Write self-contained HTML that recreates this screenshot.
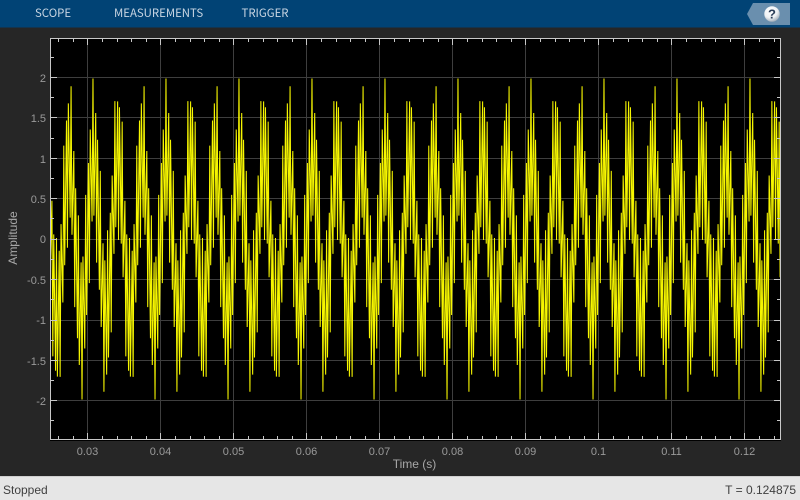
<!DOCTYPE html>
<html><head><meta charset="utf-8"><title>Scope</title>
<style>
html,body{margin:0;padding:0;width:800px;height:500px;overflow:hidden;background:#262626}
svg{display:block}
.t{font-family:"Noto Sans CJK JP","Liberation Sans",sans-serif;font-size:11.4px;fill:#c9d6e3}
.l{font-family:"Liberation Sans",sans-serif;font-size:11px;fill:#9a9a9a}
.a{font-family:"Liberation Sans",sans-serif;font-size:12px;fill:#a8a8a8}
.s{font-family:"Liberation Sans",sans-serif;font-size:12px;fill:#404040}
</style></head><body>
<svg width="800" height="500" viewBox="0 0 800 500" xmlns="http://www.w3.org/2000/svg">
<defs>
<radialGradient id="hb" cx="40%" cy="30%" r="75%"><stop offset="0" stop-color="#fff"/><stop offset=".6" stop-color="#eef1f4"/><stop offset="1" stop-color="#9aa6b2"/></radialGradient>
<clipPath id="c"><rect x="51" y="39" width="729" height="400"/></clipPath>
<polyline id="p" fill="none" stroke="#f6f600" stroke-width="1.05" vector-effect="non-scaling-stroke" stroke-linejoin="bevel" points="0,0 1,.9405 2,-.546 3,1.3565 4,.809 5,.2168 6,1.9877 7,.2898 8,.9511 9,1.5597 10,-.2929 11,1.2296 12,.309 13,-.6286 14,.8436 15,-1.0898 16,-.5878 17,-.0533 18,-1.891 19,-.2653 20,-1 21,-1.6795 22,.109 23,-1.4675 24,-.5878 25,.3244 26,-1.1564 27,.7856 28,.309 29,-.1846 30,1.7071 31,.1455 32,.9511 33,1.704 34,-.0123 35,1.631 36,.809 37,-.0577 38,1.454 39,-.4737 40,0 41,.4737 42,-1.454 43,.0577 44,-.809 45,-1.631 46,.0123 47,-1.704 48,-.9511 49,-.1455 50,-1.7071 51,.1846 52,-.309 53,-.7856 54,1.1564 55,-.3244 56,.5878 57,1.4675 58,-.109 59,1.6795 60,1 61,.2653 62,1.891 63,.0533 64,.5878 65,1.0898 66,-.8436 67,.6286 68,-.309 69,-1.2296 70,.2929 71,-1.5597 72,-.9511 73,-.2898 74,-1.9877 75,-.2168 76,-.809 77,-1.3565 78,.546 79,-.9405 80,0"/>
</defs>
<rect width="800" height="500" fill="#262626"/>
<rect width="800" height="27.5" fill="#014375"/>
<text class="t" x="35" y="17">SCOPE</text>
<text class="t" x="114" y="17">MEASUREMENTS</text>
<text class="t" x="241.500" y="17">TRIGGER</text>
<polygon points="747,14 753,3 790,3 790,25 753,25" fill="#6a8fae"/>
<circle cx="772" cy="14" r="7.700" fill="url(#hb)"/>
<text x="772" y="18.500" text-anchor="middle" font-family="Liberation Sans,sans-serif" font-weight="bold" font-size="13" fill="#2c3e58">?</text>

<rect x="50" y="38" width="731" height="403" fill="#000"/>
<g stroke="#3e3e3e" stroke-width="1" fill="none" shape-rendering="crispEdges">
<path d="M87.500 39V439M160.500 39V439M233.500 39V439M306.500 39V439M379.500 39V439M452.500 39V439M525.500 39V439M598.500 39V439M671.500 39V439M744.500 39V439"/>
<path d="M51 77.500H780M51 117.500H780M51 158.500H780M51 198.500H780M51 239.500H780M51 279.500H780M51 320.500H780M51 360.500H780M51 400.500H780"/>
</g>
<g clip-path="url(#c)">
<use href="#p" transform="translate(14.5,239) scale(.9125,-80.75)"/>
<use href="#p" transform="translate(87.5,239) scale(.9125,-80.75)"/>
<use href="#p" transform="translate(160.5,239) scale(.9125,-80.75)"/>
<use href="#p" transform="translate(233.5,239) scale(.9125,-80.75)"/>
<use href="#p" transform="translate(306.5,239) scale(.9125,-80.75)"/>
<use href="#p" transform="translate(379.5,239) scale(.9125,-80.75)"/>
<use href="#p" transform="translate(452.5,239) scale(.9125,-80.75)"/>
<use href="#p" transform="translate(525.5,239) scale(.9125,-80.75)"/>
<use href="#p" transform="translate(598.5,239) scale(.9125,-80.75)"/>
<use href="#p" transform="translate(671.5,239) scale(.9125,-80.75)"/>
<use href="#p" transform="translate(744.5,239) scale(.9125,-80.75)"/>
</g>
<g stroke="#c8c8c8" stroke-width="1" fill="none" shape-rendering="crispEdges">
<path d="M50.500 38.500H780.500V439.500H50.500Z"/>
<path d="M87.500 39v6M160.500 39v6M233.500 39v6M306.500 39v6M379.500 39v6M452.500 39v6M525.500 39v6M598.500 39v6M671.500 39v6M744.500 39v6"/>
<path d="M87.500 439v-6M160.500 439v-6M233.500 439v-6M306.500 439v-6M379.500 439v-6M452.500 439v-6M525.500 439v-6M598.500 439v-6M671.500 439v-6M744.500 439v-6"/>
<path d="M58.500 39v3M73.500 39v3M102.500 39v3M117.500 39v3M131.500 39v3M146.500 39v3M175.500 39v3M190.500 39v3M204.500 39v3M219.500 39v3M248.500 39v3M263.500 39v3M277.500 39v3M292.500 39v3M321.500 39v3M336.500 39v3M350.500 39v3M365.500 39v3M394.500 39v3M409.500 39v3M423.500 39v3M438.500 39v3M467.500 39v3M482.500 39v3M496.500 39v3M511.500 39v3M540.500 39v3M555.500 39v3M569.500 39v3M584.500 39v3M613.500 39v3M628.500 39v3M642.500 39v3M657.500 39v3M686.500 39v3M701.500 39v3M715.500 39v3M730.500 39v3M759.500 39v3M774.500 39v3"/>
<path d="M58.500 439v-3M73.500 439v-3M102.500 439v-3M117.500 439v-3M131.500 439v-3M146.500 439v-3M175.500 439v-3M190.500 439v-3M204.500 439v-3M219.500 439v-3M248.500 439v-3M263.500 439v-3M277.500 439v-3M292.500 439v-3M321.500 439v-3M336.500 439v-3M350.500 439v-3M365.500 439v-3M394.500 439v-3M409.500 439v-3M423.500 439v-3M438.500 439v-3M467.500 439v-3M482.500 439v-3M496.500 439v-3M511.500 439v-3M540.500 439v-3M555.500 439v-3M569.500 439v-3M584.500 439v-3M613.500 439v-3M628.500 439v-3M642.500 439v-3M657.500 439v-3M686.500 439v-3M701.500 439v-3M715.500 439v-3M730.500 439v-3M759.500 439v-3M774.500 439v-3"/>
<path d="M51 77.500h6M51 117.500h6M51 158.500h6M51 198.500h6M51 239.500h6M51 279.500h6M51 320.500h6M51 360.500h6M51 400.500h6"/>
<path d="M780 77.500h-6M780 117.500h-6M780 158.500h-6M780 198.500h-6M780 239.500h-6M780 279.500h-6M780 320.500h-6M780 360.500h-6M780 400.500h-6"/>
<path d="M51 57.500h3M51 97.500h3M51 138.500h3M51 178.500h3M51 218.500h3M51 259.500h3M51 299.500h3M51 340.500h3M51 380.500h3M51 420.500h3"/>
<path d="M780 57.500h-3M780 97.500h-3M780 138.500h-3M780 178.500h-3M780 218.500h-3M780 259.500h-3M780 299.500h-3M780 340.500h-3M780 380.500h-3M780 420.500h-3"/>
</g>
<g text-anchor="end">
<text class="l" x="46" y="82">2</text>
<text class="l" x="46" y="122">1.5</text>
<text class="l" x="46" y="163">1</text>
<text class="l" x="46" y="203">0.5</text>
<text class="l" x="46" y="243">0</text>
<text class="l" x="46" y="284">-0.5</text>
<text class="l" x="46" y="324">-1</text>
<text class="l" x="46" y="365">-1.5</text>
<text class="l" x="46" y="405">-2</text>
</g>
<g text-anchor="middle">
<text class="l" x="87.500" y="455">0.03</text>
<text class="l" x="160.500" y="455">0.04</text>
<text class="l" x="233.500" y="455">0.05</text>
<text class="l" x="306.500" y="455">0.06</text>
<text class="l" x="379.500" y="455">0.07</text>
<text class="l" x="452.500" y="455">0.08</text>
<text class="l" x="525.500" y="455">0.09</text>
<text class="l" x="598.500" y="455">0.1</text>
<text class="l" x="671.500" y="455">0.11</text>
<text class="l" x="744.500" y="455">0.12</text>
<text class="a" x="414.500" y="468">Time (s)</text>
<text class="a" x="0" y="0" transform="translate(17,238) rotate(-90)">Amplitude</text>
</g>
<rect x="0" y="477" width="800" height="23" fill="#e6e6e6"/>
<rect x="0" y="476" width="800" height="1" fill="#cfcfcf"/>
<text class="s" x="3" y="494">Stopped</text>
<text class="s" x="796" y="494" text-anchor="end">T = 0.124875</text>
</svg>
</body></html>
